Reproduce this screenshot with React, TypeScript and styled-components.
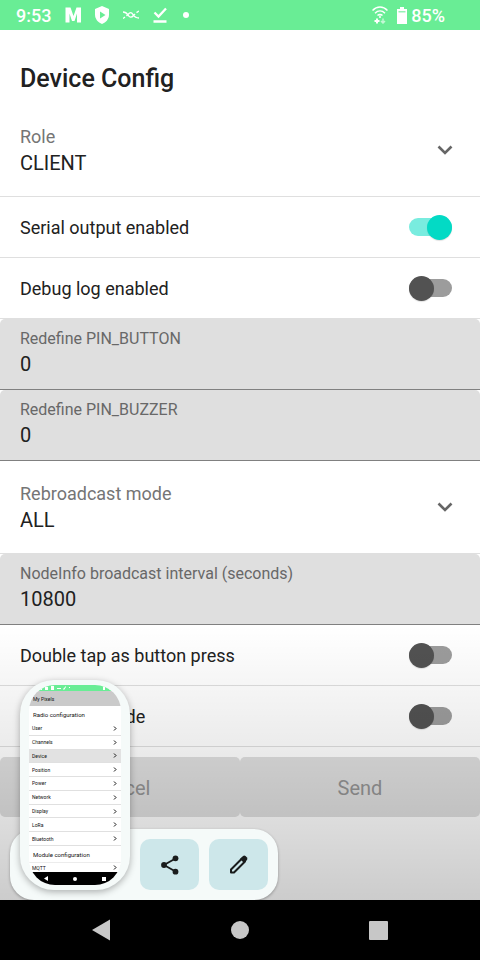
import React, { useId, useState } from "react";
import styled, { createGlobalStyle } from "styled-components";

const GlobalStyle = createGlobalStyle`
  *, *::before, *::after { box-sizing: border-box; }
  body { margin: 0; background: #fff; color: #212121; }
  body, button, input, select { font-family: Roboto, "Noto Sans", sans-serif; }
`;

const Screen = styled.div`
  display: flex;
  flex-direction: column;
  min-height: 100vh;
`;

const StatusBar = styled.header`
  display: flex;
  align-items: center;
  justify-content: space-between;
  height: 30px;
  padding: 0 35px 0 16px;
  background: #69ed95;
  color: #fff;
  font-size: 18px;
  font-weight: 500;
`;

const StatusGroup = styled.div<{ $gap: number }>`
  display: flex;
  align-items: center;
  gap: ${(p) => p.$gap}px;
  svg { display: block; }
`;

const Battery = styled.span`
  display: flex;
  align-items: center;
  gap: 4px;
`;

const Content = styled.main`
  position: relative;
  flex: 1;
`;

const Title = styled.h1`
  margin: 0;
  padding: 32px 20px 12px;
  font-size: 25px;
  line-height: 33px;
  font-weight: 500;
`;

const Row = styled.div`
  display: flex;
  align-items: center;
  justify-content: space-between;
  min-height: 61px;
  padding: 0 28px 0 20px;
  border-bottom: 1px solid #dfdfdf;
`;

const RowLabel = styled.label`
  padding-top: 2px;
  font-size: 18px;
  line-height: 24px;
`;

const Switch = styled.input`
  appearance: none;
  position: relative;
  display: flex;
  align-items: center;
  width: 43px;
  height: 25px;
  margin: 0;
  border-radius: 13px;
  cursor: pointer;

  &::before {
    content: "";
    flex: 1;
    height: 18px;
    border-radius: 9px;
    background: #9c9c9c;
  }
  &::after {
    content: "";
    position: absolute;
    left: 0;
    width: 25px;
    height: 25px;
    border-radius: 50%;
    background: #525252;
    box-shadow: 0 1px 1px rgba(0, 0, 0, 0.12);
  }
  &:checked::before { background: #79ecdf; }
  &:checked::after { left: auto; right: 0; background: #03dac5; }
`;

const DropRow = styled.div<{ $tall?: boolean }>`
  display: grid;
  grid-template-columns: 1fr 24px;
  align-items: center;
  padding: ${(p) => (p.$tall ? "20px 23px" : "17px 23px 20px")};
  padding-left: 20px;
  border-bottom: 1px solid #dfdfdf;
`;

const DropText = styled.div`
  display: flex;
  flex-direction: column;
`;

const DropLabel = styled.label`
  font-size: 18px;
  line-height: 26px;
  color: #757575;
`;

const Select = styled.select`
  appearance: none;
  height: 26px;
  margin: 0;
  padding: 0;
  border: 0;
  background: none;
  color: inherit;
  font-size: 20px;
  line-height: 26px;
`;

const Field = styled.div`
  display: flex;
  flex-direction: column;
  padding: 8px 20px 12px;
  background: #dfdfdf;
  border-bottom: 1px solid #808080;
  border-radius: 5px 5px 0 0;
`;

const FieldLabel = styled.label`
  font-size: 16px;
  line-height: 24px;
  color: #686868;
`;

const FieldInput = styled.input`
  height: 26px;
  padding: 0;
  border: 0;
  outline: 0;
  background: none;
  color: inherit;
  font-size: 20px;
`;

const Actions = styled.div`
  display: grid;
  grid-template-columns: 1fr 1fr;
  margin-top: 10px;
`;

const ActionButton = styled.button`
  height: 60px;
  padding: 2px 0 0;
  border: 0;
  border-radius: 5px;
  background: #dfdfdf;
  color: #949494;
  font-size: 20px;
`;

const Scrim = styled.div`
  position: absolute;
  inset: auto 0 0;
  height: 275px;
  pointer-events: none;
  background: linear-gradient(rgba(0, 0, 0, 0), rgba(0, 0, 0, 0.08) 45%, rgba(0, 0, 0, 0.2));
`;

const SharePanel = styled.aside`
  position: absolute;
  left: 10px;
  bottom: 0;
  display: flex;
  gap: 10px;
  padding: 10px 10px 10px 130px;
  border-radius: 24px;
  background: #f5faf9;
  box-shadow: 0 1px 3px rgba(0, 0, 0, 0.3);
`;

const ShareButton = styled.button`
  display: grid;
  place-items: center;
  width: 59px;
  height: 51px;
  padding: 0;
  border: 0;
  border-radius: 10px;
  background: #cde7ea;
  color: #191c1c;
`;

const Preview = styled.div`
  position: absolute;
  left: 20px;
  bottom: 10px;
  width: 110px;
  padding: 5px 9px;
  border-radius: 34px;
  background: #f5faf9;
  box-shadow: 0 2px 7px rgba(0, 0, 0, 0.3);
`;

const PreviewScreen = styled.div`
  display: flex;
  flex-direction: column;
  height: 200px;
  overflow: hidden;
  border-radius: 26px;
  background: #fff;
  color: #111;
  font-size: 5px;
  line-height: 8px;
`;

const PreviewStatus = styled.div`
  height: 6px;
  padding-left: 11px;
  background: #69ed95;
  line-height: 6px;
`;

const PreviewBar = styled.div`
  height: 15px;
  padding: 4px;
  background: #cacaca;
`;

const PreviewHeading = styled.div`
  height: 16px;
  padding: 5px 4px 0;
  font-size: 6px;
`;

const PreviewList = styled.div`
  display: grid;
  grid-auto-rows: 1fr;
  height: 124px;
`;

const PreviewItem = styled.div<{ $active?: boolean }>`
  display: flex;
  align-items: center;
  justify-content: space-between;
  padding: 0 4px 0 3px;
  background: ${(p) => (p.$active ? "#e2e2e2" : "#fff")};
  border-bottom: 1px solid #e0e0e0;
`;

const PreviewLast = styled(PreviewItem)`
  height: 10px;
  border-bottom: 0;
  border-top: 1px solid #ececec;
`;

const PreviewNav = styled.div`
  display: flex;
  align-items: center;
  justify-content: space-around;
  height: 13px;
  margin-top: auto;
  padding: 0 3px;
  background: #000;
`;

const NavBar = styled.nav`
  display: grid;
  grid-template-columns: 1fr 1fr 1fr;
  height: 60px;
  padding: 0 32px;
  background: #000;
`;

const NavButton = styled.button`
  display: grid;
  place-items: center;
  padding: 0;
  border: 0;
  background: none;
  color: #c7c7c7;
`;

const Chevron = () => (
  <svg width="24" height="24" viewBox="0 0 24 24" fill="none" stroke="#666" strokeWidth="2.6" aria-hidden="true">
    <path d="M5.500 8.500L12 15l6.500-6.500" />
  </svg>
);

const SmallChevron = () => (
  <svg width="4" height="5" viewBox="0 0 4 5" fill="none" stroke="#111" strokeWidth="1" aria-hidden="true">
    <path d="M1 .5l2 2-2 2" />
  </svg>
);

function ToggleRow({ label, on = false }: { label: string; on?: boolean }) {
  const id = useId();
  const [checked, setChecked] = useState(on);
  return (
    <Row>
      <RowLabel htmlFor={id}>{label}</RowLabel>
      <Switch id={id} type="checkbox" role="switch" checked={checked} onChange={(e) => setChecked(e.target.checked)} />
    </Row>
  );
}

function DropDown({ label, options, tall }: { label: string; options: string[]; tall?: boolean }) {
  const id = useId();
  return (
    <DropRow $tall={tall}>
      <DropText>
        <DropLabel htmlFor={id}>{label}</DropLabel>
        <Select id={id} defaultValue={options[0]}>
          {options.map((o) => (
            <option key={o}>{o}</option>
          ))}
        </Select>
      </DropText>
      <Chevron />
    </DropRow>
  );
}

function NumberField({ label, value }: { label: string; value: string }) {
  const id = useId();
  return (
    <Field>
      <FieldLabel htmlFor={id}>{label}</FieldLabel>
      <FieldInput id={id} inputMode="numeric" defaultValue={value} />
    </Field>
  );
}

const RADIO_ITEMS = ["User", "Channels", "Device", "Position", "Power", "Network", "Display", "LoRa", "Bluetooth"];

export default function App() {
  return (
    <Screen>
      <GlobalStyle />
      <StatusBar>
        <StatusGroup $gap={14}>
          <span>9:53</span>
          <svg width="16" height="16" viewBox="0 0 16 16" fill="#fff" aria-hidden="true">
            <path d="M.5 15.500V.5h5L8.500 9l3-8.500h4.500v15h-4V6.500L9.500 14h-2.500L4.500 6.500v9z" />
          </svg>
          <svg width="14" height="18" viewBox="0 0 14 18" aria-hidden="true">
            <path d="M7 0l7 3v5.500c0 4.500-3 8-7 9.500-4-1.500-7-5-7-9.500V3z" fill="#fff" />
            <path d="M5 5.500l5.500 3.500L5 12.500z" fill="#69ed95" />
          </svg>
          <svg width="16" height="10" viewBox="0 0 16 10" fill="none" stroke="#fff" strokeWidth="1.400" aria-hidden="true">
            <path d="M0 8.500l2-1.500M3.500 6L5 4.500C7 2 8.500 2 10 4.500S13.500 8 16 8M0 2c2.500 0 3.500.5 5 3s3.500 3 5.500.5L12 4M13.500 2.700L16 1" />
          </svg>
          <svg width="14" height="16" viewBox="0 0 14 16" fill="none" stroke="#fff" strokeWidth="2.300" aria-hidden="true">
            <path d="M1.500 5.500l4 4L13 1.500M.5 14.500h13" />
          </svg>
          <svg width="10" height="6" viewBox="0 0 10 6" fill="#fff" aria-hidden="true">
            <circle cx="5" cy="3" r="3" />
          </svg>
        </StatusGroup>
        <StatusGroup $gap={9}>
          <svg width="16" height="18" viewBox="0 0 16 18" fill="none" stroke="#fff" strokeWidth="1.500" aria-hidden="true">
            <path d="M.5 4.500C5-.2 11-.2 15.500 4.500M3 7.200c3-3 7-3 10 0M5.500 9.500c1.500-1.500 3.500-1.500 5 0" />
            <path d="M8 9.500v2.500" />
            <path d="M5 12.500v5M2.500 15h5" strokeWidth="2" />
            <path d="M11 12.500v4.500M9 15l2 2 2-2" opacity=".6" />
          </svg>
          <Battery>
            <svg width="10" height="17" viewBox="0 0 10 17" aria-hidden="true">
              <path d="M3 0h4v2h3v15H0V2h3z" fill="#fff" />
              <path d="M1.500 4h7v1.500h-7z" fill="#69ed95" opacity=".7" />
            </svg>
            <span>85%</span>
          </Battery>
        </StatusGroup>
      </StatusBar>

      <Content>
        <Title>Device Config</Title>
        <DropDown label="Role" options={["CLIENT", "CLIENT_MUTE", "ROUTER"]} />
        <ToggleRow label="Serial output enabled" on />
        <ToggleRow label="Debug log enabled" />
        <NumberField label="Redefine PIN_BUTTON" value="0" />
        <NumberField label="Redefine PIN_BUZZER" value="0" />
        <DropDown label="Rebroadcast mode" options={["ALL", "LOCAL_ONLY"]} tall />
        <NumberField label="NodeInfo broadcast interval (seconds)" value="10800" />
        <ToggleRow label="Double tap as button press" />
        <ToggleRow label="Managed mode" />
        <Actions>
          <ActionButton disabled>Cancel</ActionButton>
          <ActionButton disabled>Send</ActionButton>
        </Actions>
        <Scrim />

        <SharePanel>
          <ShareButton aria-label="Share">
            <svg width="22" height="22" viewBox="0 0 22 22" fill="currentColor" aria-hidden="true">
              <path d="M16.500 4.500L5 11l11.500 6.500" fill="none" stroke="currentColor" strokeWidth="1.800" />
              <circle cx="16.500" cy="4.300" r="2.900" />
              <circle cx="5" cy="11" r="2.900" />
              <circle cx="16.500" cy="17.700" r="2.900" />
            </svg>
          </ShareButton>
          <ShareButton aria-label="Edit">
            <svg width="22" height="22" viewBox="0 0 22 22" aria-hidden="true">
              <path d="M3 15.500L14 4.500l3 3-11 11H3z" fill="none" stroke="currentColor" strokeWidth="2" strokeLinejoin="round" />
              <path d="M12 5l3-3q1.300-.8 2.500 0l1.500 1.500q.8 1.200 0 2.500l-3 3z" fill="currentColor" />
            </svg>
          </ShareButton>
        </SharePanel>

        <Preview>
          <PreviewScreen>
            <PreviewStatus>
              <svg width="76" height="6" viewBox="0 0 76 6" fill="#fff" aria-hidden="true">
                <path d="M0 1h2v4H0zM5 2h3v3H5zM11 1h3v4h-3zM17 3h4v1h-4zM23 4l3-3v1l-2 3zM29 2h1v1h-1zM63 1h4v1h-2v3h-2zM69 1h2v4h-2zM72 2h3v3h-3z" />
              </svg>
            </PreviewStatus>
            <PreviewBar>My Pixels</PreviewBar>
            <PreviewHeading>Radio configuration</PreviewHeading>
            <PreviewList>
              {RADIO_ITEMS.map((name) => (
                <PreviewItem key={name} $active={name === "Device"}>
                  {name}
                  <SmallChevron />
                </PreviewItem>
              ))}
            </PreviewList>
            <PreviewHeading>Module configuration</PreviewHeading>
            <PreviewLast>
              MQTT
              <SmallChevron />
            </PreviewLast>
            <PreviewNav>
              <svg width="4" height="5" viewBox="0 0 4 5" fill="#fff" aria-hidden="true"><path d="M4 0v5L0 2.500z" /></svg>
              <svg width="4" height="4" viewBox="0 0 4 4" fill="#fff" aria-hidden="true"><circle cx="2" cy="2" r="2" /></svg>
              <svg width="4" height="4" viewBox="0 0 4 4" fill="#fff" aria-hidden="true"><path d="M0 0h4v4H0z" /></svg>
            </PreviewNav>
          </PreviewScreen>
        </Preview>
      </Content>

      <NavBar>
        <NavButton aria-label="Back">
          <svg width="20" height="22" viewBox="0 0 20 22" fill="currentColor" aria-hidden="true"><path d="M19 .5v21L1 11z" /></svg>
        </NavButton>
        <NavButton aria-label="Home">
          <svg width="18" height="18" viewBox="0 0 18 18" fill="currentColor" aria-hidden="true"><circle cx="9" cy="9" r="9" /></svg>
        </NavButton>
        <NavButton aria-label="Recent apps">
          <svg width="19" height="19" viewBox="0 0 19 19" fill="currentColor" aria-hidden="true"><rect width="19" height="19" rx="1" /></svg>
        </NavButton>
      </NavBar>
    </Screen>
  );
}
